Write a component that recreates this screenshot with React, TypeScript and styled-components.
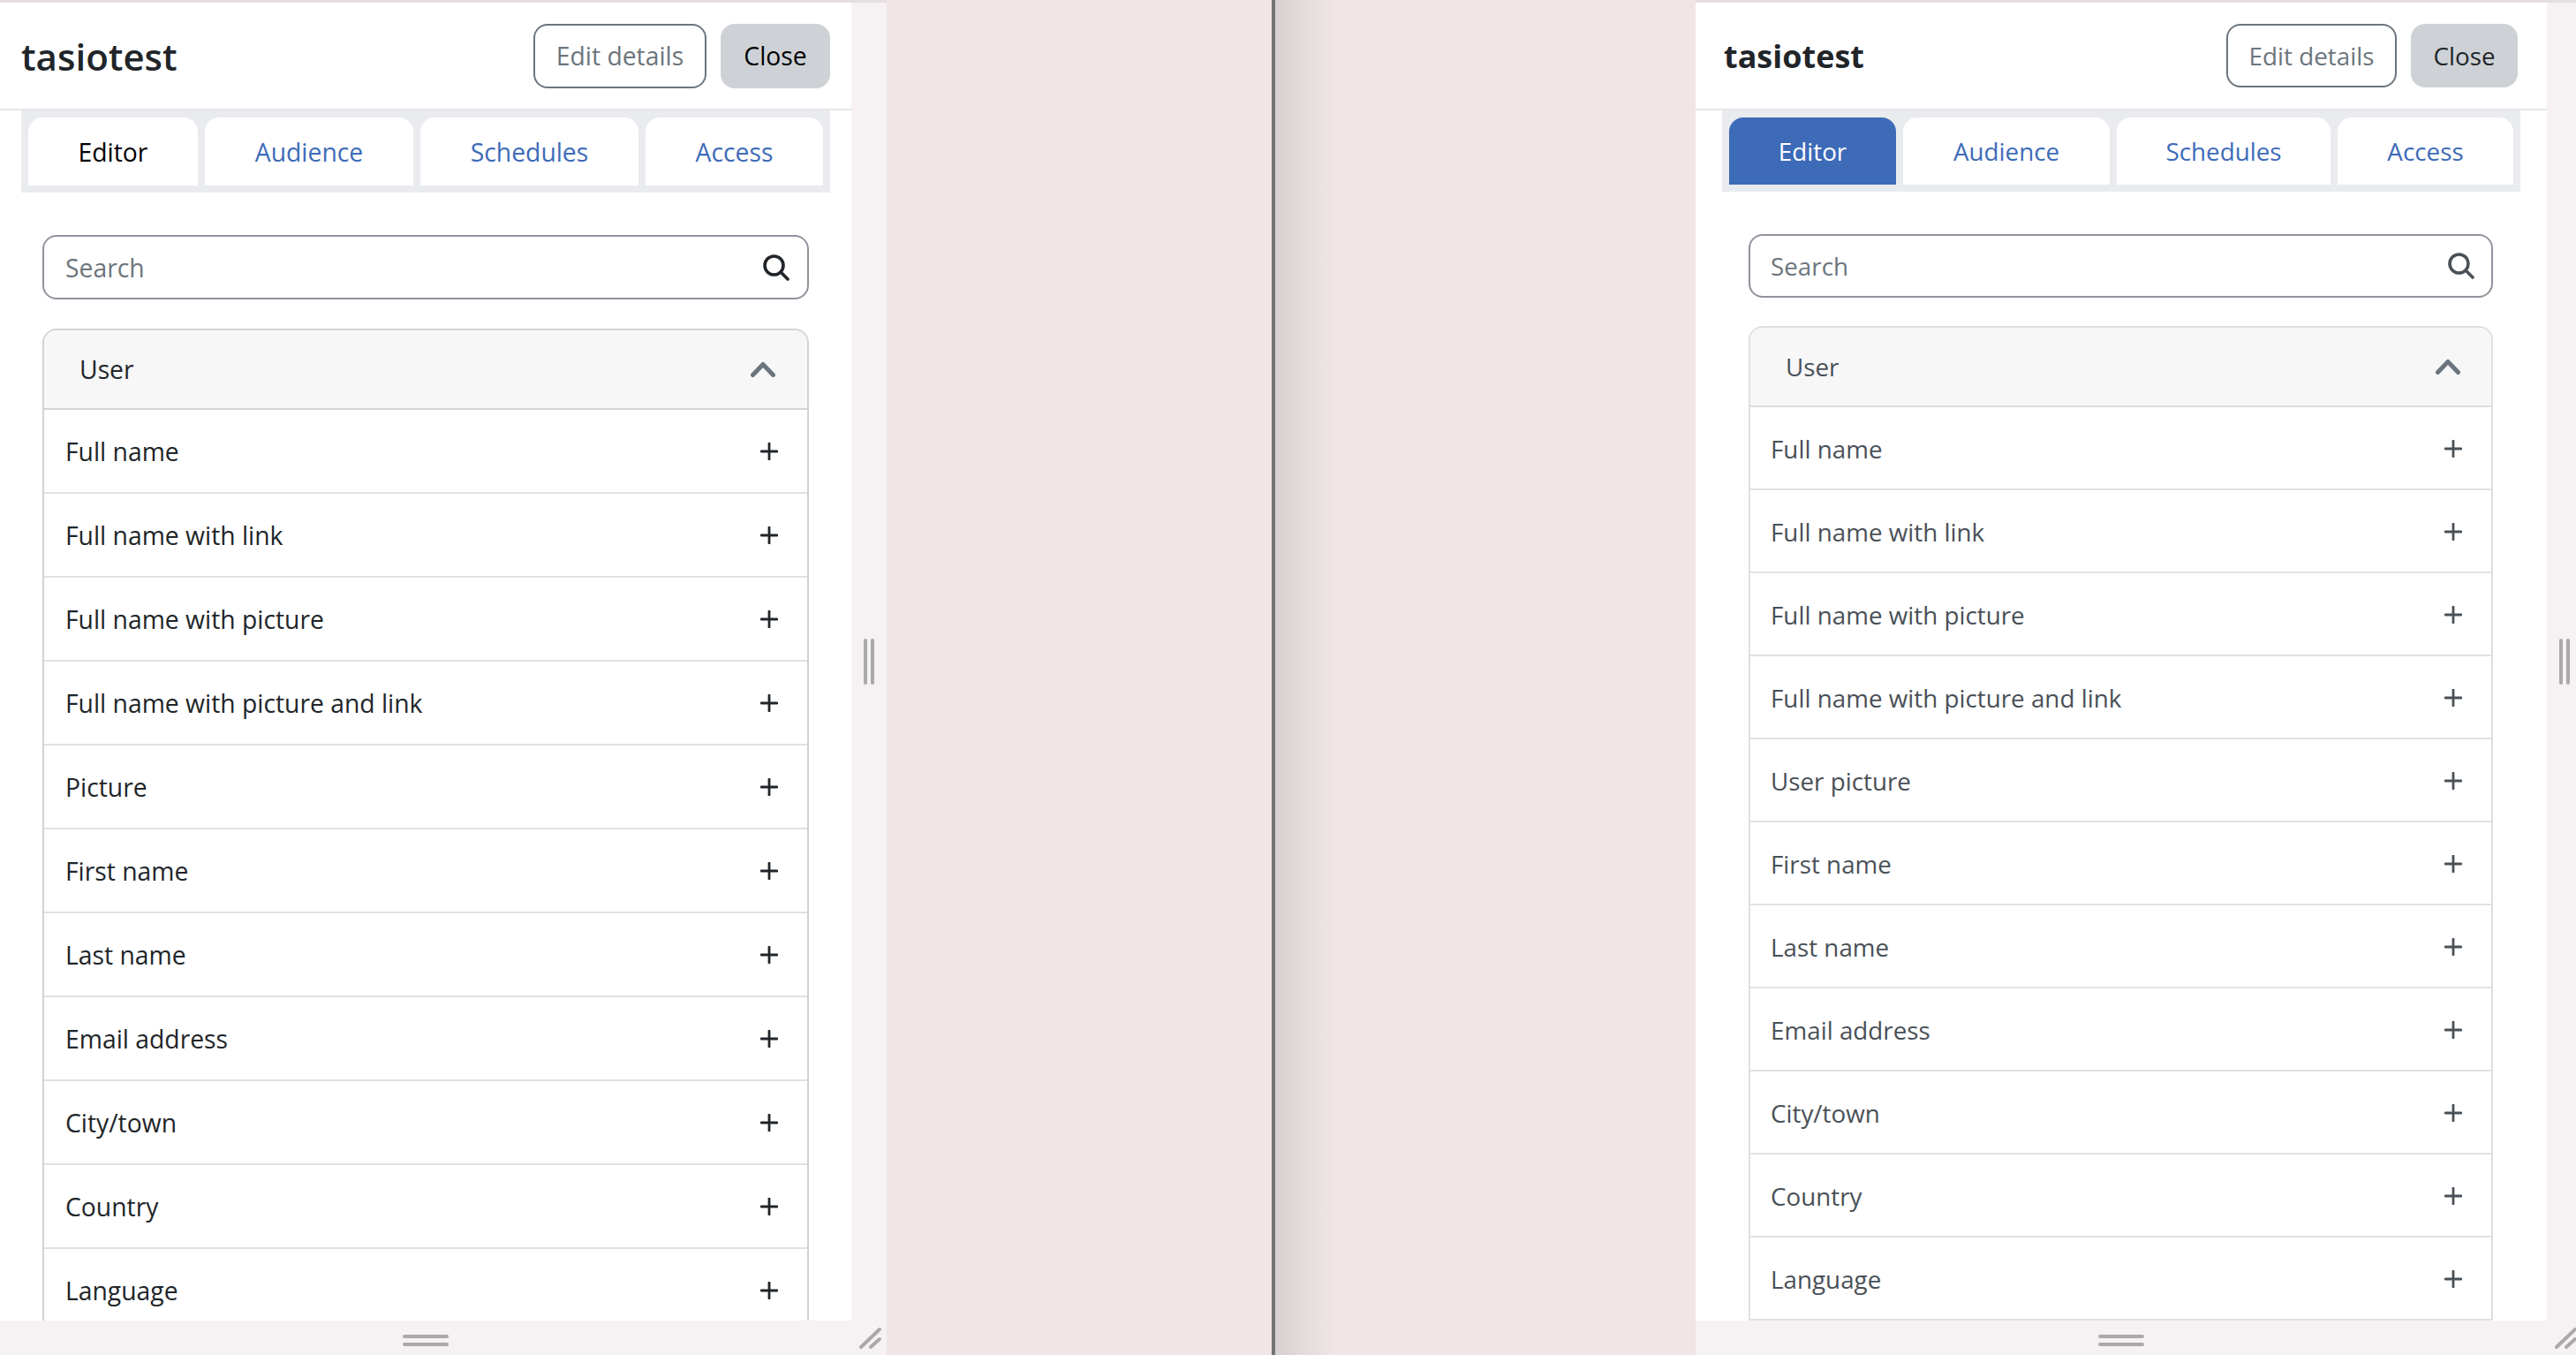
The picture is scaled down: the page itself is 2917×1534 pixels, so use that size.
import styled, { createGlobalStyle } from "styled-components"

type Look = {
    titleSize: number
    titleWeight: number
    titleLeft: number
    textColor: string
    fontSize: number
    headH: number
    stripLeft: number
    stripW: number
    tabCols: string
    activeBg: string
    activeFg: string
    searchLeft: number
    searchW: number
    searchH: number
    searchTop: number
    listTop: number
    headerH: number
    rowH: number
    rowPadL: number
    rowPadR: number
    chevR: number
    iconR: number
    line: string
    btnRight: number
    editW: number
    closeW: number
    btnH: number
}

const wide: Look = {
    titleSize: 42,
    titleWeight: 600,
    titleLeft: 24,
    textColor: "#212529",
    fontSize: 28.3,
    headH: 120,
    stripLeft: 24,
    stripW: 916,
    tabCols: "192px 236px 247px 201px",
    activeBg: "#ffffff",
    activeFg: "#000000",
    searchLeft: 48,
    searchW: 868,
    searchH: 73,
    searchTop: 48,
    listTop: 33,
    headerH: 90,
    rowH: 95,
    rowPadL: 24,
    rowPadR: 33,
    chevR: 36,
    iconR: 20,
    line: "#d2d3d5",
    btnRight: 24,
    editW: 196,
    closeW: 124,
    btnH: 73,
}

const narrow: Look = {
    titleSize: 36,
    titleWeight: 700,
    titleLeft: 32,
    textColor: "#495057",
    fontSize: 27.8,
    headH: 120,
    stripLeft: 30,
    stripW: 904,
    tabCols: "189px 234px 242px 199px",
    activeBg: "#3d6bb8",
    activeFg: "#ffffff",
    searchLeft: 60,
    searchW: 843,
    searchH: 72,
    searchTop: 48,
    listTop: 32,
    headerH: 90,
    rowH: 94,
    rowPadL: 23,
    rowPadR: 33,
    chevR: 35,
    iconR: 19,
    line: "#dfdfdf",
    btnRight: 33,
    editW: 193,
    closeW: 121,
    btnH: 72,
}

const wideFields = ["Full name", "Full name with link", "Full name with picture", "Full name with picture and link", "Picture", "First name", "Last name", "Email address", "City/town", "Country", "Language"]
const narrowFields = ["Full name", "Full name with link", "Full name with picture", "Full name with picture and link", "User picture", "First name", "Last name", "Email address", "City/town", "Country", "Language"]
const tabs = ["Editor", "Audience", "Schedules", "Access"]

const Panel = ({ look, fields }: { look: Look; fields: string[] }) => {
    return (
        <Window>
            <Body $l={look}>
                <Head $l={look}>
                    <Title $l={look}>tasiotest</Title>
                    <HeadButtons>
                        <EditButton $l={look}>Edit details</EditButton>
                        <CloseButton $l={look}>Close</CloseButton>
                    </HeadButtons>
                </Head>
                <TabBar $l={look}>
                    {tabs.map((t, i) => (
                        <Tab key={t} $l={look} $active={i === 0}>{t}</Tab>
                    ))}
                </TabBar>
                <SearchBox $l={look}>
                    <SearchInput $l={look} placeholder="Search" />
                    <Icon width="30" height="30" viewBox="0 0 30 30" $c={look.titleWeight === 600 ? "#212529" : "#495057"}>
                        <circle cx="12.5" cy="12.5" r="10.5" fill="none" stroke="currentColor" strokeWidth="3.6" />
                        <line x1="20.5" y1="20.5" x2="28" y2="28" stroke="currentColor" strokeWidth="3.6" strokeLinecap="round" />
                    </Icon>
                </SearchBox>
                <List $l={look}>
                    <ListHeader $l={look}>
                        <span>User</span>
                        <Icon width="28" height="18" viewBox="0 0 28 18" $c="#6c757d">
                            <polyline points="2.5,15.5 14,3.5 25.5,15.5" fill="none" stroke="currentColor" strokeWidth="5" strokeLinecap="round" strokeLinejoin="round" />
                        </Icon>
                    </ListHeader>
                    {fields.map((f) => (
                        <Row key={f} $l={look}>
                            <span>{f}</span>
                            <Icon width="20" height="20" viewBox="0 0 20 20" $c={look.textColor}>
                                <path d="M10 1v18M1 10h18" fill="none" stroke="currentColor" strokeWidth="2.8" strokeLinecap="round" />
                            </Icon>
                        </Row>
                    ))}
                </List>
            </Body>
            <SideGrip>
                <VBar />
                <VBar />
            </SideGrip>
            <BottomGrip>
                <HBar />
                <HBar />
            </BottomGrip>
            <Corner>
                <svg width="26" height="26" viewBox="0 0 26 26">
                    <line x1="3" y1="23" x2="24" y2="3" stroke="#a9a9a9" strokeWidth="4" strokeLinecap="round" />
                    <line x1="14" y1="23" x2="24" y2="14" stroke="#a9a9a9" strokeWidth="4" strokeLinecap="round" />
                </svg>
            </Corner>
        </Window>
    )
}

const App = () => {
    return (
        <>
            <Global />
            <Stage>
                <Panel look={wide} fields={wideFields} />
                <Gutter>
                    <Splitter />
                    <SplitShadow />
                </Gutter>
                <Panel look={narrow} fields={narrowFields} />
            </Stage>
        </>
    )
}

const Global = createGlobalStyle`
    html,body{
        margin:0;
        padding:0;
        overflow:hidden;
        background:#efe6e5;
    }
    *{
        box-sizing:border-box;
    }
`

const Stage = styled.div`
    display:flex;
    width:2917px;
    height:1534px;
    overflow:hidden;
    background:#efe6e5;
    font-family:"Open Sans","Noto Sans",sans-serif;
`

const Window = styled.div`
    position:relative;
    flex:none;
    display:grid;
    grid-template-columns:964px 40px;
    grid-template-rows:1492px 39px;
    width:1004px;
    height:1534px;
    padding-top:3px;
    background:linear-gradient(#e4dedd 3px,#f6f1f3 3px);
`

const Gutter = styled.div`
    flex:none;
    display:flex;
    width:916px;
    height:100%;
    padding-left:436px;
`

const Splitter = styled.div`
    flex:none;
    width:4px;
    background:#737373;
`

const SplitShadow = styled.div`
    flex:none;
    width:70px;
    background:linear-gradient(90deg,#d6cfcf,#e4dcdc 45%,#efe6e5);
`

const Body = styled.div<{ $l: Look }>`
    overflow:hidden;
    background:#fff;
    font-size:${(p) => p.$l.fontSize}px;
    color:${(p) => p.$l.textColor};
`

const Head = styled.div<{ $l: Look }>`
    display:flex;
    align-items:center;
    justify-content:space-between;
    height:${(p) => p.$l.headH + 2}px;
    padding:0 ${(p) => p.$l.btnRight}px 0 ${(p) => p.$l.titleLeft}px;
    border-bottom:2px solid #e4e7eb;
`

const Title = styled.div<{ $l: Look }>`
    font-size:${(p) => p.$l.titleSize}px;
    font-weight:${(p) => p.$l.titleWeight};
    color:#212529;
`

const HeadButtons = styled.div`
    display:flex;
    gap:16px;
`

const EditButton = styled.button<{ $l: Look }>`
    width:${(p) => p.$l.editW}px;
    height:${(p) => p.$l.btnH}px;
    padding:0;
    border:2px solid #6c757d;
    border-radius:16px;
    background:#fff;
    color:#6c757d;
    font:inherit;
    font-size:${(p) => p.$l.fontSize}px;
`

const CloseButton = styled.button<{ $l: Look }>`
    width:${(p) => p.$l.closeW}px;
    height:${(p) => p.$l.btnH}px;
    padding:0;
    border:0;
    border-radius:16px;
    background:#ced2d6;
    color:${(p) => (p.$l.titleWeight === 600 ? "#000" : "#212529")};
    font:inherit;
    font-size:${(p) => p.$l.fontSize}px;
`

const TabBar = styled.div<{ $l: Look }>`
    display:grid;
    grid-template-columns:${(p) => p.$l.tabCols};
    gap:8px;
    width:${(p) => p.$l.stripW}px;
    margin-left:${(p) => p.$l.stripLeft}px;
    padding:8px;
    background:#e9ebef;
`

const Tab = styled.div<{ $l: Look; $active?: boolean }>`
    display:flex;
    align-items:center;
    justify-content:center;
    height:${(p) => p.$l.btnH + 4}px;
    border-radius:16px 16px 0 0;
    background:${(p) => (p.$active ? p.$l.activeBg : "#fff")};
    color:${(p) => (p.$active ? p.$l.activeFg : "#3d6bb8")};
`

const SearchBox = styled.div<{ $l: Look }>`
    display:flex;
    align-items:center;
    width:${(p) => p.$l.searchW}px;
    height:${(p) => p.$l.searchH}px;
    margin:${(p) => p.$l.searchTop}px 0 0 ${(p) => p.$l.searchLeft}px;
    padding:0 ${(p) => p.$l.iconR}px 0 ${(p) => p.$l.rowPadL}px;
    border:2px solid #8f939b;
    border-radius:16px;
    background:#fff;
`

const SearchInput = styled.input<{ $l: Look }>`
    flex:1;
    min-width:0;
    padding:0;
    border:0;
    outline:0;
    background:transparent;
    font:inherit;
    font-size:${(p) => p.$l.fontSize}px;
    &::placeholder{
        color:#6c757d;
        opacity:1;
    }
`

const Icon = styled.svg<{ $c: string }>`
    flex:none;
    display:block;
    color:${(p) => p.$c};
`

const List = styled.div<{ $l: Look }>`
    width:${(p) => p.$l.searchW}px;
    margin:${(p) => p.$l.listTop}px 0 0 ${(p) => p.$l.searchLeft}px;
    border:2px solid ${(p) => p.$l.line};
    border-bottom:0;
    border-radius:16px 16px 0 0;
`

const ListHeader = styled.div<{ $l: Look }>`
    display:flex;
    align-items:center;
    justify-content:space-between;
    height:${(p) => p.$l.headerH}px;
    padding:0 ${(p) => p.$l.chevR}px 0 40px;
    border-bottom:2px solid ${(p) => p.$l.line};
    border-radius:14px 14px 0 0;
    background:#f7f7f7;
`

const Row = styled.div<{ $l: Look }>`
    display:flex;
    align-items:center;
    justify-content:space-between;
    height:${(p) => p.$l.rowH}px;
    padding:1px ${(p) => p.$l.rowPadR}px 0 ${(p) => p.$l.rowPadL}px;
    border-bottom:2px solid #dee2e6;
`

const SideGrip = styled.div`
    display:flex;
    align-items:center;
    justify-content:center;
    gap:4px;
    background:#f6f1f3;
`

const VBar = styled.div`
    width:4px;
    height:52px;
    border-radius:2px;
    background:#a9a9a9;
`

const BottomGrip = styled.div`
    grid-column:1 / 2;
    display:flex;
    flex-direction:column;
    align-items:center;
    justify-content:center;
    gap:5px;
    padding-top:6px;
    background:#f6f1f3;
`

const HBar = styled.div`
    width:52px;
    height:4px;
    border-radius:2px;
    background:#a9a9a9;
`

const Corner = styled.div`
    position:absolute;
    right:6px;
    bottom:6px;
    width:26px;
    height:26px;
`

export default App
